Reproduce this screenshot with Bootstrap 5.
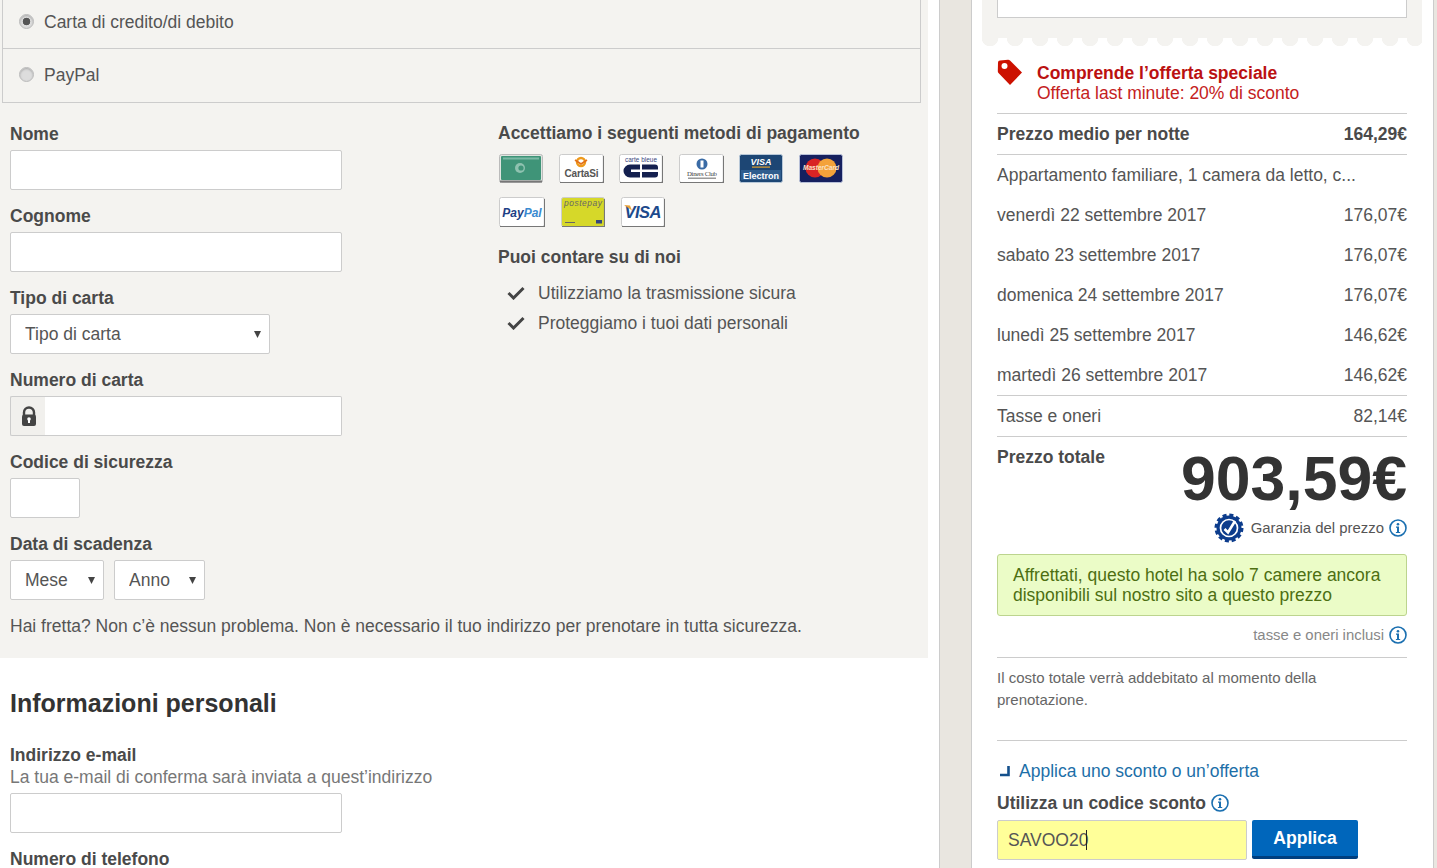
<!DOCTYPE html>
<html lang="it"><head><meta charset="utf-8"><title>Prenotazione</title>
<link href="https://cdn.jsdelivr.net/npm/bootstrap@5.3.0/dist/css/bootstrap.min.css" rel="stylesheet">
<style>
html,body{height:868px;overflow:hidden}
body{font-family:"Liberation Sans",Arial,sans-serif;font-size:17.5px;color:#555;background:#fff;line-height:22px}
.page-wrap{display:flex;height:868px}
.left-col{width:928px;flex:none}
.pay-panel{background:#f4f3f0;height:658px}
.pay-list{margin-left:2px;width:919px;border:1px solid #ccc;border-top:0;border-radius:0}
.pay-item{display:flex;align-items:center;gap:10px;padding:0 16px;background:transparent;border:0;margin:0;font-size:17.5px;color:#555}
.pay-item+.pay-item{border-top:1px solid #ccc}
.pay-a{height:48px;padding-bottom:5px}
.pay-b{height:54px;padding-bottom:2px}
.pay-item .form-check-input{width:15px;height:15px;margin:0;float:none;border:1px solid #bbb;background-color:#ddd;background-image:none;flex:none;box-shadow:inset 0 1px 2px #aaa}
.pay-item .form-check-input:checked{background-color:#ddd;background-image:radial-gradient(circle,#555 3.5px,transparent 4.1px);border-color:#bbb}
.pay-form{display:flex;padding:20px 0 0 10px}
.fld-col{width:488px;flex:none}
.fld{margin-bottom:15px}
.fld-label{display:block;font-weight:700;color:#4a4a4a;margin:0 0 5px;font-size:17.5px;line-height:22px}
.fld-input{height:40px;width:332px;border:1px solid #ccc;border-radius:2px;box-shadow:none;font-size:17.5px;color:#555;padding:0 14px;background-color:#fff}
.fld-select{height:40px;border:1px solid #ccc;border-radius:2px;font-size:17.5px;color:#555;padding:0 24px 0 14px;background-color:#fff;background-image:url("data:image/svg+xml,%3Csvg xmlns='http://www.w3.org/2000/svg' width='8' height='7'%3E%3Cpath d='M0 0h7L3.5 7z' fill='%23444'/%3E%3C/svg%3E");background-size:8px 7px;background-position:right 7px center;box-shadow:none;line-height:38px}
.w-type{width:260px}.w-month{width:94px}.w-year{width:91px}
.date-row{display:flex;gap:10px}
.lock-group{width:332px;height:40px;flex-wrap:nowrap}
.lock-box{width:36px;height:40px;flex:none;padding:0;justify-content:center;background:#f1f0ed;border:1px solid #ccc;border-right:0;border-radius:2px 0 0 2px}
.lock-input{height:40px;border:1px solid #ccc;border-left:0;border-radius:0 2px 2px 0;box-shadow:none}
.w-code{width:70px}
.side-col{margin-top:-1px}
.side-title{font-weight:700;color:#4a4a4a;font-size:17.5px;line-height:22px;margin:0}
.card-row{display:flex;gap:15.5px;margin-top:10px;padding-left:1px}
.card-row+.card-row{margin-top:14px;gap:16px}
.card-row svg{display:block;flex:none}
.trust-title{margin-top:19px}
.trust-list{margin:10px 0 0;padding:0;list-style:none}
.trust-list li{display:flex;align-items:center;height:30px;padding-left:9px;gap:13px}
.fast-note{padding:0 10px;margin:15px 0 0}
.personal{padding:0 10px}
.personal h2{font-size:25px;font-weight:700;color:#333;margin:30px 0 0;line-height:30px}
.personal .em-label{margin:26px 0 0}
.hint{color:#777;margin-bottom:5px}
.personal .tel-label{margin-top:15px}
.gutter-strip{width:33px;margin-left:11px;flex:none;background:#e9e6e0;border-left:1px solid #ccc;border-right:1px solid #ccc}
.right-col{width:461px;flex:none;background:#fff;position:relative}
.right-end{flex:1;background:#e9e6e0;border-left:1px solid #ccc}
.stamp{margin:0 11px 0 10px;background:#f4f3f0;height:38px;padding:0 15px}
.stamp-input{display:block;height:18px;border:1px solid #ccc;border-top:0;background:#fff}
.stamp-edge{margin:0 11px 0 10px;height:8px;background:radial-gradient(circle at 8px 0,#f4f3f0 8px,transparent 8.6px) repeat-x;background-size:25px 8px}
.sum{padding:0 26px 0 25px}
.offer{display:flex;gap:14px;height:68px;padding-top:13px;border-bottom:1px solid #ccc;line-height:20px}
.offer svg{flex:none}
.offer-t{font-weight:700;padding-top:4px;color:#bb1111}
.offer-s{color:#c42121}
.sum-row{display:flex;justify-content:space-between;align-items:center;height:40px;margin:0}
.sum-b{font-weight:700;color:#4a4a4a;height:41px;border-bottom:1px solid #ccc}
.sum-l{height:41px;border-bottom:1px solid #ccc}
.total{display:flex;justify-content:space-between;height:87px}
.total-l{font-weight:700;color:#4a4a4a;padding-top:9px}
.total-v{font-size:62.5px;font-weight:700;color:#333;line-height:62px;padding-top:10px}
.guar{display:flex;justify-content:flex-end;align-items:center;height:30px;margin-top:-11px;font-size:14.9px;color:#555}
.guar svg:first-child{margin-right:7px}
.guar svg:last-child{margin-left:5px}
.hurry{margin:11px 0 0;padding:10px 15px;background:#ebfcc7;border:1px solid #bcd48e;border-radius:3px;color:#4d6f12;line-height:20px;height:62px}
.tax{display:flex;justify-content:flex-end;align-items:center;height:42px;padding-bottom:3px;border-bottom:1px solid #ccc;font-size:14.9px;color:#888}
.tax svg{margin-left:5px}
.small-note{font-size:15px;line-height:22px;color:#666;margin:9px 0 0;height:74px;border-bottom:1px solid #ccc;padding:0 80px 28px 0}
.disc-link{display:flex;align-items:center;gap:8px;margin-top:19px;height:22px;color:#1d6fa8;text-decoration:none}
.disc-label{display:flex;align-items:center;gap:5px;font-weight:700;color:#4a4a4a;margin-top:10px;height:22px}
.disc-row{display:flex;gap:5px;margin-top:6px}
.disc-wrap{position:relative;width:250px}
.disc-input{height:40px;background:#ffff99;border:1px solid #ccc;border-radius:2px;box-shadow:none;font-size:17.5px;color:#555;padding:0 10px}
.disc-caret{position:absolute;left:89px;top:10px;width:1px;height:20px;background:#222}
.disc-btn{width:106px;height:39px;padding:1px 0 0;background:#06b;border:0;border-bottom:3px solid #003f7f;border-radius:2px;font-size:17.6px;font-weight:700;color:#fff}
</style></head>
<body>
<svg width="0" height="0" class="position-absolute">
<symbol id="info" viewBox="0 0 18 18"><circle cx="9" cy="9" r="8" fill="none" stroke="#1a6fb0" stroke-width="1.6"/><circle cx="9" cy="5.2" r="1.3" fill="#1a6fb0"/><path d="M7 7.6h3v5.3h1.2v1.2H6.900v-1.2H8V8.800H7z" fill="#1a6fb0"/></symbol>
</svg>
<div class="page-wrap">
<main class="left-col">
<section class="pay-panel">
<div class="list-group pay-list">
<label class="list-group-item pay-item pay-a"><input class="form-check-input" type="radio" name="pay" checked><span>Carta di credito/di debito</span></label>
<label class="list-group-item pay-item pay-b"><input class="form-check-input" type="radio" name="pay"><span>PayPal</span></label>
</div>
<div class="pay-form">
<div class="fld-col">
<div class="fld"><label class="fld-label">Nome</label><input class="form-control fld-input" type="text"></div>
<div class="fld"><label class="fld-label">Cognome</label><input class="form-control fld-input" type="text"></div>
<div class="fld"><label class="fld-label">Tipo di carta</label><select class="form-select fld-select w-type"><option>Tipo di carta</option></select></div>
<div class="fld"><label class="fld-label">Numero di carta</label>
<div class="input-group lock-group"><span class="input-group-text lock-box">
<svg width="16" height="21" viewBox="0 0 16 21"><path d="M3 9V6.500a5 5 0 0 1 10 0V9" fill="none" stroke="#444" stroke-width="2.400"/><rect x="1" y="8.500" width="14" height="11.500" rx="2" fill="#444"/><circle cx="8" cy="13" r="1.800" fill="#fff"/><rect x="7" y="13" width="2" height="4" fill="#fff"/></svg>
</span><input class="form-control lock-input" type="text"></div></div>
<div class="fld"><label class="fld-label">Codice di sicurezza</label><input class="form-control fld-input w-code" type="text"></div>
<div class="fld mb-0"><label class="fld-label">Data di scadenza</label><div class="date-row"><select class="form-select fld-select w-month"><option>Mese</option></select><select class="form-select fld-select w-year"><option>Anno</option></select></div></div>
</div>
<div class="side-col">
<p class="side-title">Accettiamo i seguenti metodi di pagamento</p>
<div class="card-row">
<svg width="44" height="29" viewBox="0 0 44 29"><rect x=".5" y=".5" width="43" height="28" rx="2" fill="#dfe5e0" stroke="#bbb"/><rect x="2" y="2" width="40" height="24" rx="1" fill="#3f9478"/><rect x="4" y="3.500" width="36" height="2" fill="#7cb9a5"/><circle cx="21" cy="14" r="5" fill="#8fc2b0"/><circle cx="22" cy="14" r="2.600" fill="#3f9478"/><rect x="1" y="26.500" width="42" height="2" fill="#777"/></svg>
<svg width="45" height="29" viewBox="0 0 45 29"><rect x=".5" y=".5" width="44" height="28" rx="2" fill="#fff" stroke="#ccc"/><circle cx="22" cy="8" r="4" fill="none" stroke="#ee9a1c" stroke-width="2.400"/><path d="M16 6l6 4 6-4" fill="none" stroke="#e2701a" stroke-width="1.600"/><text x="22.500" y="23" font-size="10" font-family="Liberation Sans" font-weight="700" text-anchor="middle" fill="#555" textLength="34">CartaSi</text><path d="M1 28.500h43.500V2" fill="none" stroke="#777" stroke-width="1.200"/></svg>
<svg width="44" height="29" viewBox="0 0 44 29"><rect x=".5" y=".5" width="43" height="28" rx="2" fill="#fff" stroke="#ccc"/><text x="22" y="8" font-size="6.400" text-anchor="middle" fill="#3a4a80" font-family="Liberation Sans" textLength="32">carte bleue</text><path d="M11 10.500h10v5H12v2.500h9v5.500H11a6.500 6.500 0 0 1 0-13z" fill="#14204f"/><path d="M23 10.500h13a3 3 0 0 1 3 3v2H23zM23 18h16v2.500a3 3 0 0 1-3 3H23z" fill="#14204f"/><path d="M1 28.500h42.500V2" fill="none" stroke="#777" stroke-width="1.200"/></svg>
<svg width="45" height="29" viewBox="0 0 45 29"><rect x=".5" y=".5" width="44" height="28" rx="2" fill="#fff" stroke="#ccc"/><circle cx="23" cy="10" r="5.500" fill="#3a6ba5"/><rect x="21.500" y="6.500" width="3" height="7" fill="#fff"/><text x="23" y="21.500" font-size="6.800" font-family="Liberation Serif" text-anchor="middle" fill="#444" textLength="30">Diners Club</text><rect x="9" y="23.500" width="28" height="1.500" fill="#999"/><path d="M1 28.500h43.500V2" fill="none" stroke="#777" stroke-width="1.200"/></svg>
<svg width="44" height="29" viewBox="0 0 44 29"><rect x=".5" y=".5" width="43" height="28" rx="2" fill="#1d4674" stroke="#b8c8d8"/><text x="22" y="10.500" font-size="9" font-style="italic" font-weight="700" text-anchor="middle" fill="#fff" font-family="Liberation Sans">VISA</text><rect x="13" y="12.500" width="18" height="1.200" fill="#e0a030"/><rect x="2" y="16" width="40" height="10" fill="#2f5d8e"/><text x="22" y="24.500" font-size="9" font-weight="700" text-anchor="middle" fill="#fff" font-family="Liberation Sans" textLength="36">Electron</text></svg>
<svg width="44" height="29" viewBox="0 0 44 29"><rect x=".5" y=".5" width="43" height="28" rx="2" fill="#16205f" stroke="#b8c0d8"/><circle cx="16" cy="14" r="9.500" fill="#d92424"/><circle cx="28" cy="14" r="9.500" fill="#f3a23a"/><text x="22" y="16" font-size="6.600" font-weight="700" font-style="italic" text-anchor="middle" fill="#fbe3c8" font-family="Liberation Sans" textLength="36">MasterCard</text></svg>
</div>
<div class="card-row">
<svg width="46" height="30" viewBox="0 0 46 30"><rect x=".5" y=".5" width="45" height="29" rx="2" fill="#fff" stroke="#ccc"/><text x="23" y="19.500" font-size="12" font-weight="700" font-style="italic" font-family="Liberation Sans" text-anchor="middle"><tspan fill="#1d3f85">Pay</tspan><tspan fill="#3a8ad0">Pal</tspan></text><path d="M1 29.500h44.500V2" fill="none" stroke="#777" stroke-width="1.200"/></svg>
<svg width="44" height="30" viewBox="0 0 44 30"><rect x=".5" y=".5" width="43" height="29" rx="2" fill="#d6d829" stroke="#ccc"/><text x="22" y="9" font-size="8.400" font-style="italic" font-family="Liberation Sans" text-anchor="middle" fill="#666" textLength="38">postepay</text><rect x="35" y="23" width="6" height="3.500" fill="#34457e"/><rect x="4" y="25" width="10" height="1" fill="#666"/><path d="M1 29.500h42.500V2" fill="none" stroke="#777" stroke-width="1.200"/></svg>
<svg width="44" height="30" viewBox="0 0 44 30"><rect x=".5" y=".5" width="43" height="29" rx="2" fill="#fff" stroke="#ccc"/><text x="22" y="21" font-size="16.500" font-weight="700" font-style="italic" font-family="Liberation Sans" text-anchor="middle" fill="#1d4a8c" textLength="37">VISA</text><path d="M3 8l6 .500 2 5z" fill="#e8a33a"/><path d="M1 29.500h42.500V2" fill="none" stroke="#777" stroke-width="1.200"/></svg>
</div>
<p class="side-title trust-title">Puoi contare su di noi</p>
<ul class="trust-list">
<li><svg width="18" height="14" viewBox="0 0 18 14"><path d="M1.500 7l5 5L16.500 2" fill="none" stroke="#444" stroke-width="3"/></svg><span>Utilizziamo la trasmissione sicura</span></li>
<li><svg width="18" height="14" viewBox="0 0 18 14"><path d="M1.500 7l5 5L16.500 2" fill="none" stroke="#444" stroke-width="3"/></svg><span>Proteggiamo i tuoi dati personali</span></li>
</ul>
</div>
</div>
<p class="fast-note">Hai fretta? Non c’è nessun problema. Non è necessario il tuo indirizzo per prenotare in tutta sicurezza.</p>
</section>
<section class="personal">
<h2>Informazioni personali</h2>
<label class="fld-label em-label mb-0">Indirizzo e-mail</label>
<div class="hint">La tua e-mail di conferma sarà inviata a quest’indirizzo</div>
<input class="form-control fld-input" type="email">
<label class="fld-label tel-label">Numero di telefono</label>
</section>
</main>
<div class="gutter-strip"></div>
<aside class="right-col">
<div class="stamp"><span class="stamp-input"></span></div>
<div class="stamp-edge"></div>
<div class="sum">
<div class="offer">
<svg width="26" height="27" viewBox="0 0 26 27"><path d="M3 1.500 11 0.800a2.500 2.500 0 0 1 2 .8L25 13.500 13 26 1.500 14a2.500 2.500 0 0 1-.7-1.800L1 3.500A2 2 0 0 1 3 1.500z" fill="#cc1100"/><circle cx="7.500" cy="7" r="3" fill="#fff"/></svg>
<div><div class="offer-t">Comprende l’offerta speciale</div><div class="offer-s">Offerta last minute: 20% di sconto</div></div>
</div>
<div class="sum-row sum-b"><span>Prezzo medio per notte</span><span>164,29€</span></div>
<div class="sum-row"><span>Appartamento familiare, 1 camera da letto, c...</span></div>
<div class="sum-row"><span>venerdì 22 settembre 2017</span><span>176,07€</span></div>
<div class="sum-row"><span>sabato 23 settembre 2017</span><span>176,07€</span></div>
<div class="sum-row"><span>domenica 24 settembre 2017</span><span>176,07€</span></div>
<div class="sum-row"><span>lunedì 25 settembre 2017</span><span>146,62€</span></div>
<div class="sum-row sum-l"><span>martedì 26 settembre 2017</span><span>146,62€</span></div>
<div class="sum-row sum-l"><span>Tasse e oneri</span><span>82,14€</span></div>
<div class="total"><span class="total-l">Prezzo totale</span><span class="total-v">903,59€</span></div>
<div class="guar">
<svg width="30" height="30" viewBox="0 0 30 30"><circle cx="15" cy="15" r="12.500" fill="#0c3c8c"/><circle cx="15" cy="15" r="13" fill="none" stroke="#0c3c8c" stroke-width="3" stroke-dasharray="4 2.800"/><circle cx="15" cy="15" r="8.500" fill="none" stroke="#fff" stroke-width="1.700"/><path d="M10.500 16l3.500 3.500L21 8" fill="none" stroke="#fff" stroke-width="2.600"/></svg>
<span>Garanzia del prezzo</span>
<svg width="18" height="18"><use href="#info"/></svg>
</div>
<div class="alert alert-success hurry" role="alert">Affrettati, questo hotel ha solo 7 camere ancora disponibili sul nostro sito a questo prezzo</div>
<div class="tax"><span>tasse e oneri inclusi</span><svg width="18" height="18"><use href="#info"/></svg></div>
<p class="small-note">Il costo totale verrà addebitato al momento della prenotazione.</p>
<a class="disc-link" href="#"><svg width="14" height="12" viewBox="0 0 14 12"><path d="M3 10h8.500V1" fill="none" stroke="#14508c" stroke-width="2.600"/></svg><span>Applica uno sconto o un’offerta</span></a>
<div class="disc-label"><span>Utilizza un codice sconto</span><svg width="18" height="18"><use href="#info"/></svg></div>
<div class="disc-row">
<div class="disc-wrap"><input class="form-control disc-input" type="text" value="SAVOO20"><span class="disc-caret"></span></div>
<button class="btn btn-primary disc-btn" type="button">Applica</button>
</div>
</div>
</aside>
<div class="right-end"></div>
</div>
</body></html>
